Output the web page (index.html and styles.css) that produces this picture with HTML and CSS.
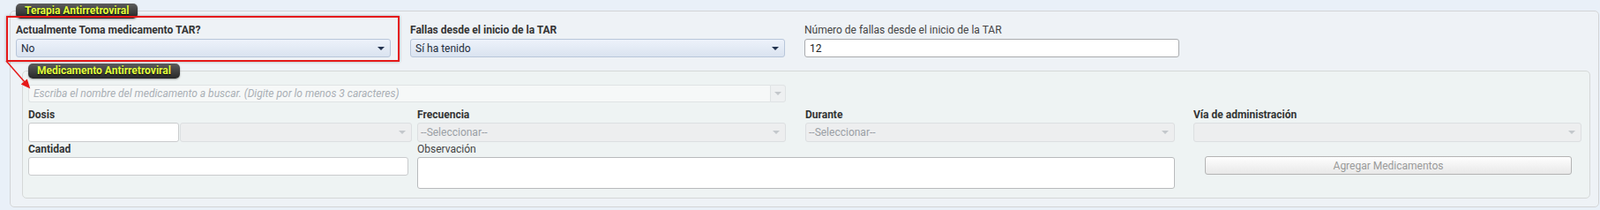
FILE: index.html
```html
<!DOCTYPE html>
<html lang="es">

<head>
    <meta charset="UTF-8">
    <meta name="viewport" content="width=device-width, initial-scale=1.0">
    <title>Terapia Antirretroviral</title>
    <link rel="stylesheet" href="styles.css">
</head>

<body>
    <div class="page">
        <fieldset class="panel outer">
            <legend class="tag">Terapia Antirretroviral</legend>
            <div class="top-row">
                <div class="field">
                    <label class="lbl">Actualmente Toma medicamento TAR?</label>
                    <div class="combo">
                        <span>No</span>
                        <svg class="caret" viewBox="0 0 8 4"><path d="M0 0h8L4 4z" /></svg>
                    </div>
                </div>
                <div class="field">
                    <label class="lbl">Fallas desde el inicio de la TAR</label>
                    <div class="combo">
                        <span>Sí ha tenido</span>
                        <svg class="caret" viewBox="0 0 8 4"><path d="M0 0h8L4 4z" /></svg>
                    </div>
                </div>
                <div class="field">
                    <label class="lbl plain">Número de fallas desde el inicio de la TAR</label>
                    <input type="text" class="text" value="12">
                </div>
            </div>

            <fieldset class="panel inner">
                <legend class="tag">Medicamento Antirretroviral</legend>
                <div class="med-grid">
                    <div class="search">
                        <input type="text" disabled
                            placeholder="Escriba el nombre del medicamento a buscar. (Digite por lo menos 3 caracteres)">
                        <span class="search-btn">
                            <svg class="caret" viewBox="0 0 8 4"><path d="M0 0h8L4 4z" /></svg>
                        </span>
                    </div>

                    <div class="field first">
                        <label class="lbl">Dosis</label>
                        <div class="dosis">
                            <input type="text" class="text dosis-num">
                            <div class="combo off">
                                <span></span>
                                <svg class="caret" viewBox="0 0 8 4"><path d="M0 0h8L4 4z" /></svg>
                            </div>
                        </div>
                    </div>
                    <div class="field">
                        <label class="lbl">Frecuencia</label>
                        <div class="combo off w-418">
                            <span>--Seleccionar--</span>
                            <svg class="caret" viewBox="0 0 8 4"><path d="M0 0h8L4 4z" /></svg>
                        </div>
                    </div>
                    <div class="field">
                        <label class="lbl">Durante</label>
                        <div class="combo off w-419">
                            <span>--Seleccionar--</span>
                            <svg class="caret" viewBox="0 0 8 4"><path d="M0 0h8L4 4z" /></svg>
                        </div>
                    </div>
                    <div class="field">
                        <label class="lbl">Vía de administración</label>
                        <div class="combo off w-440">
                            <span></span>
                            <svg class="caret" viewBox="0 0 8 4"><path d="M0 0h8L4 4z" /></svg>
                        </div>
                    </div>

                    <div class="field first">
                        <label class="lbl">Cantidad</label>
                        <input type="text" class="text cantidad">
                    </div>
                    <div class="field wide">
                        <label class="lbl plain">Observación</label>
                        <textarea class="obs"></textarea>
                    </div>
                    <div class="field btn-cell">
                        <button type="button" class="add-btn">Agregar Medicamentos</button>
                    </div>
                </div>
            </fieldset>
        </fieldset>

        <!-- annotation over the first field -->
        <div class="mark"></div>
        <svg class="pointer" viewBox="0 0 40 105">
            <line x1="7" y1="69" x2="28" y2="93" />
            <path d="M33 99L25.1 95.2L30.4 90.7z" />
        </svg>
    </div>
</body>

</html>
```

FILE: styles.css
```css
* {
    box-sizing: border-box;
}

body {
    margin: 0;
    background: #e9f0f8;
    font-family: Roboto, 'Liberation Sans', Arial, sans-serif;
    font-size: 12px;
    color: #333;
}

.page {
    position: relative;
    padding: 4px 0 0 11px;
}

.panel {
    margin: 0;
    min-width: 0;
    border: 1px solid #d2d4d6;
    border-radius: 5px;
}

.outer {
    width: 1802px;
    padding: 6px 6px 9px;
    background: #eef2f6;
}

.inner {
    margin: 7px 3px 0 7px;
    padding: 7px 6px 10px;
    background: #eef3f3;
    border-color: #d5d8d8;
}

.tag {
    padding: 0 10px;
    height: 17px;
    line-height: 17px;
    border-radius: 5px;
    background: linear-gradient(#5c5c5c, #272727);
    color: #e3ff3e;
    font-size: 12px;
    font-weight: bold;
    text-shadow: 0 1px 1px #000;
    box-shadow: 0 1px 2px rgba(0, 0, 0, 0.35);
}

.top-row {
    display: grid;
    grid-template-columns: repeat(4, 425px);
    column-gap: 22px;
}

.lbl {
    display: block;
    line-height: 14px;
    margin-bottom: 3px;
    font-weight: bold;
    color: #333;
}

.lbl.plain {
    font-weight: normal;
    color: #444;
}

.inner .lbl {
    margin-bottom: 2px;
}

.combo {
    display: flex;
    align-items: center;
    justify-content: space-between;
    height: 21px;
    padding: 0 6px 0 5px;
    border: 1px solid #b8c6da;
    border-radius: 3px;
    background: linear-gradient(#edf2fa, #dae3f0);
    color: #1f2d3d;
}

.caret {
    width: 8px;
    height: 4px;
    fill: #22324f;
}

.combo.off {
    height: 22px;
    padding-left: 3px;
    background: #edeeef;
    border-color: #dcdfe1;
    color: #9a9fa5;
}

.combo.off .caret {
    fill: #c3c7cb;
}

.w-418 { width: 418px; }
.w-419 { width: 419px; }
.w-440 { width: 440px; }

.text {
    display: block;
    width: 100%;
    height: 21px;
    padding: 0 5px;
    border: 1px solid #a9abae;
    border-radius: 3px;
    background: #fff;
    font: inherit;
    color: #222;
    outline: 0;
}

.med-grid {
    display: grid;
    grid-template-columns: 441px 440px 440px 440px;
    row-gap: 1px;
}

.first {
    grid-column: 1;
}

.search {
    grid-column: 1 / 3;
    display: flex;
    width: 859px;
    height: 20px;
    margin-bottom: 6px;
}

.search input {
    flex: 1;
    height: 20px;
    padding: 0 5px;
    border: 1px solid #dfe3e4;
    border-right: 0;
    border-radius: 3px 0 0 3px;
    background: #f6f8f8;
    font: inherit;
    font-style: italic;
}

.search input::placeholder {
    color: #a9afb5;
}

.search-btn {
    display: flex;
    align-items: center;
    justify-content: center;
    width: 18px;
    border: 1px solid #dfe3e4;
    border-radius: 0 3px 3px 0;
    background: #eef0f1;
}

.search-btn .caret {
    fill: #c3c7cb;
}

.dosis {
    display: flex;
    gap: 1px;
    width: 435px;
}

.dosis-num {
    width: 171px;
    height: 22px;
    border-color: #c9cbcd;
}

.dosis .combo {
    flex: 1;
}

.cantidad {
    width: 431px;
    border-color: #c9cbcd;
}

.wide {
    grid-column: span 2;
}

.obs {
    display: block;
    width: 859px;
    height: 36px;
    border: 1px solid #b8babc;
    border-radius: 3px;
    background: #fff;
    resize: none;
    outline: 0;
}

.btn-cell {
    padding-top: 15px;
}

.add-btn {
    display: block;
    width: 416px;
    height: 21px;
    margin-left: 13px;
    border: 1px solid #b4b4b4;
    border-radius: 3px;
    background: linear-gradient(#fefefe, #e8e8e8);
    font: inherit;
    color: #9a9a9a;
}

.mark {
    position: absolute;
    left: 7px;
    top: 18px;
    width: 446px;
    height: 52px;
    border: 2px solid #e51919;
    box-shadow: 0 0 3px rgba(0, 0, 0, 0.3);
    pointer-events: none;
}

.pointer {
    position: absolute;
    left: 0;
    top: 0;
    width: 40px;
    height: 105px;
    fill: #e51919;
    stroke: #e51919;
    stroke-width: 1.5;
    pointer-events: none;
}
```
